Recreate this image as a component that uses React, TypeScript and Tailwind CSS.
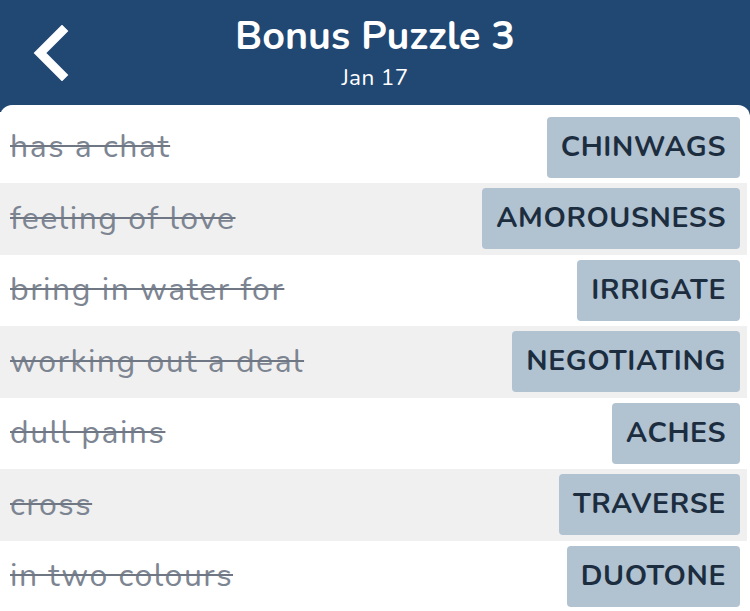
import React from "react";

interface Clue {
  clue: string;
  answer: string;
}

const clues: Clue[] = [
  { clue: "has a chat", answer: "CHINWAGS" },
  { clue: "feeling of love", answer: "AMOROUSNESS" },
  { clue: "bring in water for", answer: "IRRIGATE" },
  { clue: "working out a deal", answer: "NEGOTIATING" },
  { clue: "dull pains", answer: "ACHES" },
  { clue: "cross", answer: "TRAVERSE" },
  { clue: "in two colours", answer: "DUOTONE" },
];

const font = { fontFamily: '"Nunito", "Lato", "Open Sans", sans-serif' };

const BackIcon = () => (
  <svg width="40" height="56" viewBox="0 0 40 56" fill="none">
    <polyline
      points="30,6 8,28 30,50"
      stroke="white"
      strokeWidth="9"
      strokeLinecap="square"
      strokeLinejoin="miter"
    />
  </svg>
);

export default function App() {
  return (
    <div className="w-[750px] h-[611px] overflow-hidden bg-[#214873]" style={font}>
      <div className="relative h-[105px] flex flex-col items-center">
        <button className="absolute left-[32px] top-[25px]">
          <BackIcon />
        </button>
        <h1 className="mt-[11px] text-[39.5px] leading-[50px] font-bold text-white">
          Bonus Puzzle 3
        </h1>
        <p className="mt-[2px] text-[22.5px] leading-[30px] text-white tracking-[0.4px]">
          Jan 17
        </p>
      </div>
      <div className="bg-white rounded-t-[12px] pt-[6.5px] h-[506px]">
        {clues.map((c, i) => (
          <div
            key={i}
            className={`h-[71.5px] mr-[3px] flex items-center justify-between ${
              i % 2 === 1 ? "bg-[#f0f0f0]" : "bg-white"
            }`}
          >
            <span className="pl-[10px] text-[32px] tracking-[1.5px] text-[#7d8592] line-through decoration-[2px] decoration-[#6f7785]">
              {c.clue}
            </span>
            <span className="mr-[7px] h-[61px] px-[14px] flex items-center rounded-[4px] bg-[#b1c2d1] text-[28.5px] font-bold text-[#1c2d40] tracking-[0.6px]">
              {c.answer}
            </span>
          </div>
        ))}
      </div>
    </div>
  );
}
